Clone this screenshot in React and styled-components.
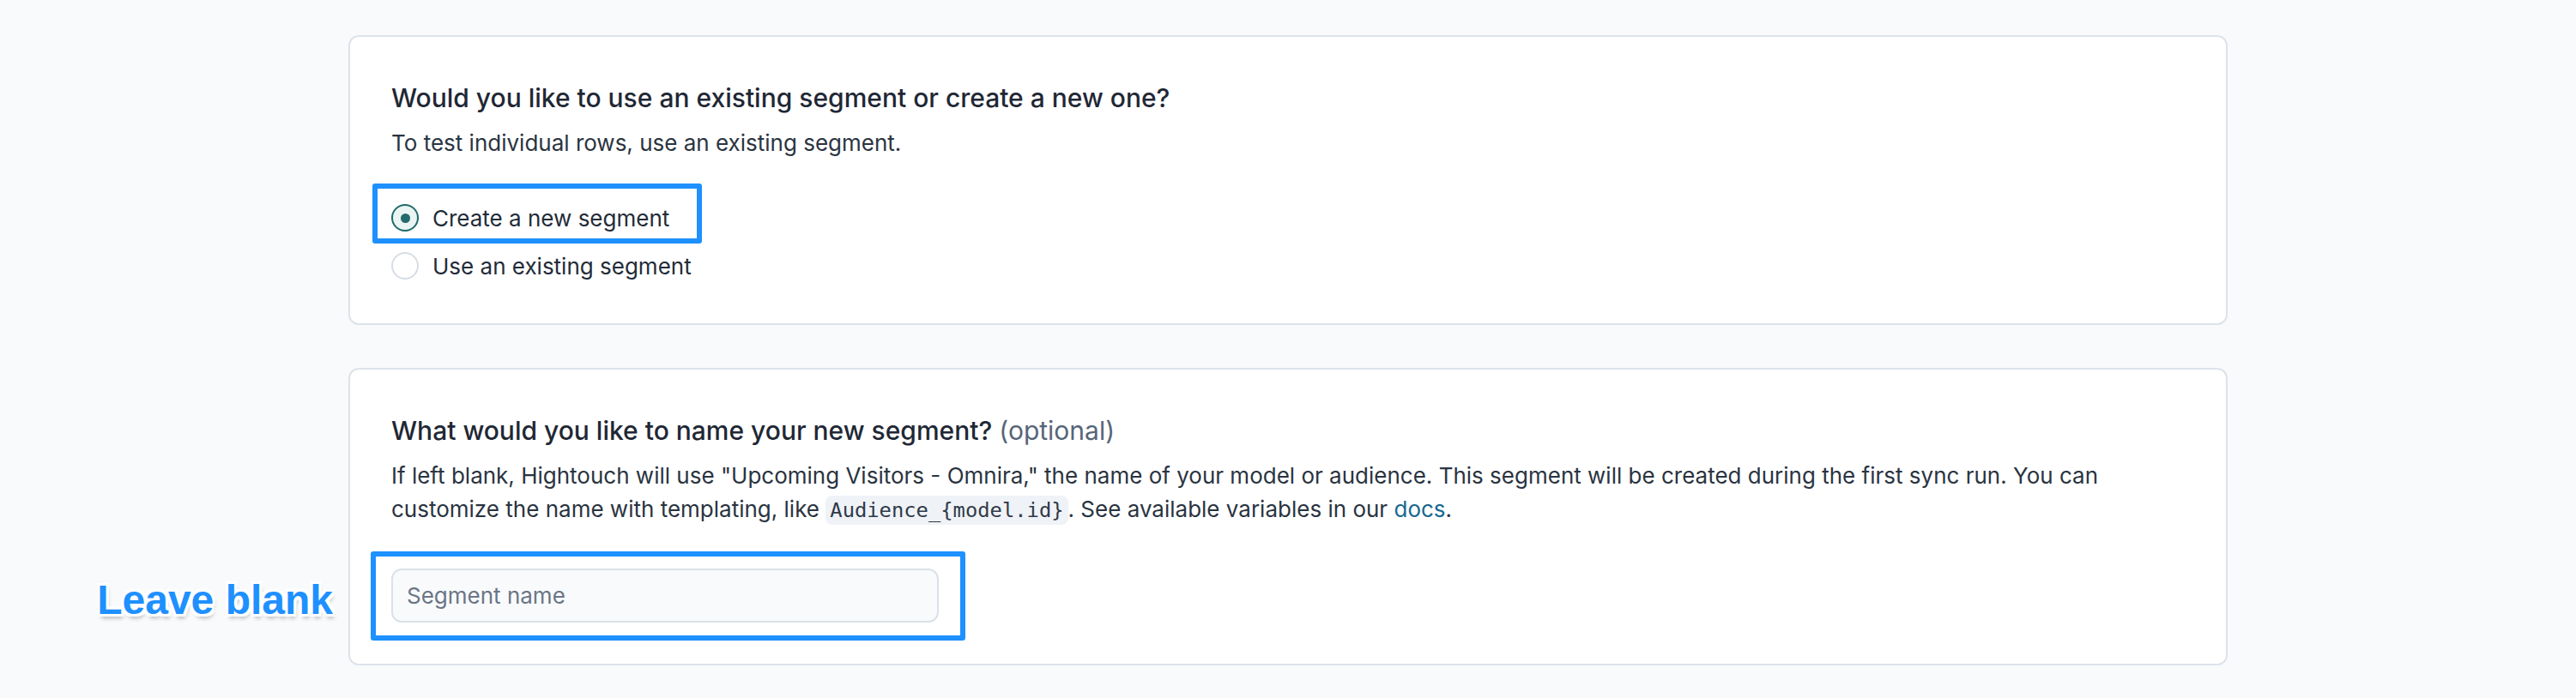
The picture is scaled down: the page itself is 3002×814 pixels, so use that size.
import React from "react";
import styled, { createGlobalStyle } from "styled-components";

const Global = createGlobalStyle`
  html, body { margin: 0; padding: 0; background: #f8fafc; }
  body { font-family: Inter, "Noto Sans", sans-serif; color: #222b38; }
`;

const Page = styled.div`
  min-height: 814px;
  padding-top: 41px;
  display: flex;
  flex-direction: column;
  align-items: center;
  gap: 50px;
  box-sizing: border-box;
`;

const Card = styled.section`
  width: 2190px;
  box-sizing: border-box;
  background: #ffffff;
  border: 2px solid #dde3ea;
  border-radius: 12px;
  padding: 51px 48px ${(p) => p.$bottom || 47}px 48px;
  display: flex;
  flex-direction: column;
`;

const Heading = styled.h2`
  margin: 0;
  font-size: 30px;
  line-height: 40px;
  font-weight: 500;
  color: #1f2835;
`;

const Optional = styled.span`
  font-weight: 400;
  color: #566579;
`;

const Text = styled.p`
  margin: 13px 0 0;
  font-size: 26px;
  line-height: 39px;
  color: #2a3441;
`;

const Code = styled.code`
  font-family: "DejaVu Sans Mono", "Liberation Mono", monospace;
  font-size: 23.8px;
  line-height: 28px;
  background: #eff2f6;
  color: #2f3a4a;
  border-radius: 8px;
  padding: 3px 5px;
`;

const Link = styled.a`
  color: #17688f;
  text-decoration: none;
`;

const RadioGroup = styled.div`
  margin-top: 48px;
  display: flex;
  flex-direction: column;
  gap: 16px;
`;

const RadioRow = styled.label`
  position: relative;
  display: flex;
  align-items: center;
  gap: 16px;
  height: 40px;
  font-size: 26px;
  color: #232c39;
`;

const RadioCircle = styled.span`
  width: 32px;
  height: 32px;
  box-sizing: border-box;
  border-radius: 50%;
  border: 2px solid ${(p) => (p.$checked ? "#1f6a6a" : "#d7dde5")};
  background: ${(p) => (p.$checked ? "#eaf4f3" : "#ffffff")};
  display: flex;
  align-items: center;
  justify-content: center;
  &::after {
    content: "";
    display: ${(p) => (p.$checked ? "block" : "none")};
    width: 11px;
    height: 11px;
    border-radius: 50%;
    background: #226a6b;
  }
`;

const Highlight = styled.div`
  position: absolute;
  left: ${(p) => p.$left}px;
  top: ${(p) => p.$top}px;
  width: ${(p) => p.$w}px;
  height: ${(p) => p.$h}px;
  box-sizing: border-box;
  border: 6px solid #1e90ff;
  border-radius: 3px;
  pointer-events: none;
`;

const InputWrap = styled.div`
  position: relative;
  margin-top: 50px;
  width: 638px;
`;

const Input = styled.input`
  display: block;
  width: 638px;
  height: 63px;
  box-sizing: border-box;
  border: 2px solid #dbe1e8;
  border-radius: 12px;
  background: #f8fafc;
  padding: 0 16px;
  font-family: Inter, "Noto Sans", sans-serif;
  font-size: 26px;
  color: #222b38;
  outline: none;
  &::placeholder { color: #6b7585; }
`;

const Callout = styled.div`
  position: absolute;
  right: calc(100% + 68px);
  top: 13px;
  white-space: nowrap;
  font-family: "Liberation Sans", Arial, sans-serif;
  font-weight: 700;
  font-size: 48px;
  line-height: 48px;
  color: #1e90ff;
  text-shadow:
    -3px -3px 0 #fff, 3px -3px 0 #fff, -3px 3px 0 #fff, 3px 3px 0 #fff,
    0 -3px 0 #fff, 0 3px 0 #fff, -3px 0 0 #fff, 3px 0 0 #fff,
    2px 5px 5px rgba(0, 0, 0, 0.28);
`;

export default function App() {
  return (
    <>
      <Global />
      <Page>
        <Card>
          <Heading>Would you like to use an existing segment or create a new one?</Heading>
          <Text>To test individual rows, use an existing segment.</Text>
          <RadioGroup>
            <RadioRow>
              <RadioCircle $checked />
              Create a new segment
              <Highlight $left={-22} $top={-20} $w={384} $h={70} />
            </RadioRow>
            <RadioRow>
              <RadioCircle />
              Use an existing segment
            </RadioRow>
          </RadioGroup>
        </Card>
        <Card $bottom={48}>
          <Heading>
            What would you like to name your new segment? <Optional>(optional)</Optional>
          </Heading>
          <Text>
            If left blank, Hightouch will use "Upcoming Visitors - Omnira," the name of your model or
            audience. This segment will be created during the first sync run. You can customize the
            name with templating, like <Code>Audience_{"{model.id}"}</Code>. See available variables
            in our <Link href="#">docs</Link>.
          </Text>
          <InputWrap>
            <Input placeholder="Segment name" readOnly />
            <Highlight $left={-24} $top={-20} $w={693} $h={104} />
            <Callout>Leave blank</Callout>
          </InputWrap>
        </Card>
      </Page>
    </>
  );
}
